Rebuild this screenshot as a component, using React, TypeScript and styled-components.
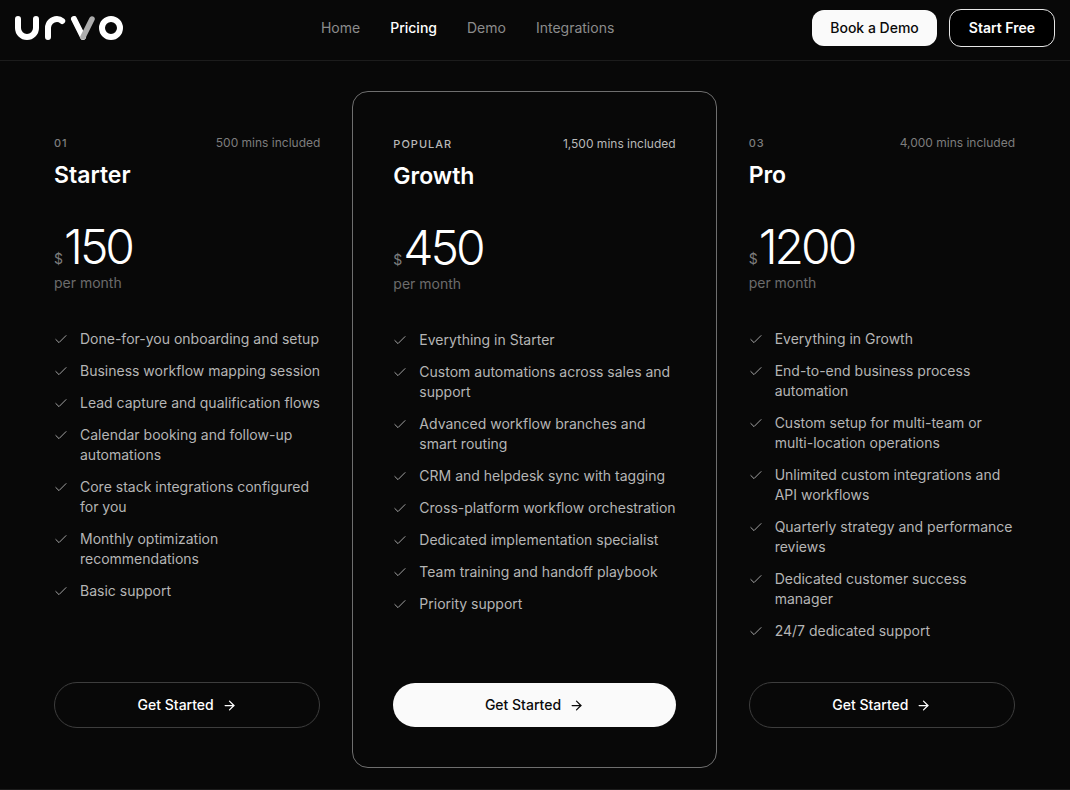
import React from 'react';
import styled, { createGlobalStyle } from 'styled-components';
import { ArrowRight } from 'lucide-react';

const GlobalStyle = createGlobalStyle`
  *, *::before, *::after { box-sizing: border-box; }
  body {
    margin: 0;
    background: #080808;
    color: #fff;
    font-family: Inter, "Liberation Sans", sans-serif;
    font-size: 14px;
    line-height: 20px;
  }
`;

const Header = styled.header`
  display: flex;
  align-items: center;
  justify-content: space-between;
  padding: 9px 15px 13px;
  border-bottom: 1px solid #1c1c1c;
`;

const LogoLink = styled.a`
  display: block;
  svg { display: block; }
`;

const Nav = styled.nav`
  display: flex;
  gap: 30px;
`;

const NavLink = styled.a<{ $active?: boolean }>`
  color: ${p => (p.$active ? '#fff' : '#8c8c8c')};
  font-weight: ${p => (p.$active ? 500 : 400)};
  text-decoration: none;
`;

const Actions = styled.div`
  display: flex;
  align-items: center;
  gap: 12px;
`;

const HeaderButton = styled.button<{ $outlined?: boolean }>`
  padding: ${p => (p.$outlined ? '8px 19px' : '8px 18px')};
  border: ${p => (p.$outlined ? '1px solid #e6e6e6' : '0')};
  border-radius: 12px;
  background: ${p => (p.$outlined ? '#000' : '#fafafa')};
  color: ${p => (p.$outlined ? '#fff' : '#0a0a0a')};
  font: ${p => (p.$outlined ? 600 : 500)} 14px/20px Inter, "Liberation Sans", sans-serif;
  cursor: pointer;
`;

const Plans = styled.main`
  display: grid;
  grid-template-columns: 1fr 1.1fr 1fr;
  padding: 30px 23px 21px 22px;
  border-bottom: 1px solid #1c1c1c;
`;

const Card = styled.article<{ $featured: boolean }>`
  display: flex;
  flex-direction: column;
  padding: ${p => (p.$featured ? '40px' : '40px 32px')};
  border: ${p => (p.$featured ? '1px solid #6e6e6e' : '0')};
  border-radius: 16px;
`;

const CardTop = styled.div<{ $featured: boolean }>`
  display: flex;
  justify-content: space-between;
  margin-bottom: 4px;
  color: ${p => (p.$featured ? '#b8b8b8' : '#7d7d7d')};
  font-size: 12px;
  line-height: 24px;
`;

const Tag = styled.span`
  font-size: 11px;
  font-weight: 500;
  letter-spacing: 1px;
`;

const PlanName = styled.h2`
  margin: 0 0 32px;
  font-size: 23px;
  font-weight: 600;
  line-height: 32px;
`;

const Price = styled.div`
  display: flex;
  align-items: baseline;
  gap: 1px;
  height: 48px;
`;

const Currency = styled.span`
  color: #7d7d7d;
`;

const Amount = styled.span`
  font-size: 48px;
  font-weight: 300;
  line-height: 48px;
  letter-spacing: -3px;
`;

const Period = styled.p`
  margin: 2px 0 0;
  color: #6c6c6c;
`;

const Features = styled.ul`
  display: flex;
  flex-direction: column;
  gap: 12px;
  margin: 36px 0 41px;
  padding: 0;
  list-style: none;
`;

const Feature = styled.li`
  display: flex;
  gap: 12px;
  color: #b5b5b5;
  svg {
    flex: none;
    margin-top: 3px;
    color: #a3a3a3;
  }
`;

const FeatureText = styled.span`
  white-space: pre;
`;

const StartButton = styled.button<{ $featured: boolean }>`
  display: flex;
  align-items: center;
  justify-content: center;
  gap: 8px;
  margin-top: auto;
  padding: 12px 24px;
  border: ${p => (p.$featured ? '0' : '1px solid #3d3d3d')};
  border-radius: 24px;
  background: ${p => (p.$featured ? '#fafafa' : 'transparent')};
  color: ${p => (p.$featured ? '#0a0a0a' : '#fff')};
  font: 500 14px/20px Inter, "Liberation Sans", sans-serif;
  cursor: pointer;
`;

function Logo() {
  return (
    <svg width="108" height="24" viewBox="0 0 108 24" fill="none" stroke="#fff" strokeWidth="6" strokeLinecap="round" role="img" aria-label="urvo">
      <path d="M3 3V12a9 9 0 0 0 18 0V3" />
      <path d="M33 21V12a9 9 0 0 1 9-9q3 0 5.200 2" />
      <path d="M59 3L68 21" />
      <path d="M77 3L68 21" stroke="#acacac" strokeWidth="5.500" />
      <circle cx="96" cy="12" r="9" />
    </svg>
  );
}

function CheckMark() {
  return (
    <svg width="14" height="14" viewBox="0 0 14 14" fill="none" stroke="currentColor" strokeWidth="1" strokeLinecap="round" strokeLinejoin="round" aria-hidden="true">
      <path d="M1.800 7.500L5 10.600L12 3.600" />
    </svg>
  );
}

interface Plan {
  tag: string;
  minutes: string;
  name: string;
  amount: string;
  featured: boolean;
  features: string[];
}

const plans: Plan[] = [
  {
    tag: '01',
    minutes: '500 mins included',
    name: 'Starter',
    amount: '150',
    featured: false,
    features: [
      'Done-for-you onboarding and setup',
      'Business workflow mapping session',
      'Lead capture and qualification flows',
      'Calendar booking and follow-up\nautomations',
      'Core stack integrations configured\nfor you',
      'Monthly optimization\nrecommendations',
      'Basic support',
    ],
  },
  {
    tag: 'POPULAR',
    minutes: '1,500 mins included',
    name: 'Growth',
    amount: '450',
    featured: true,
    features: [
      'Everything in Starter',
      'Custom automations across sales and\nsupport',
      'Advanced workflow branches and\nsmart routing',
      'CRM and helpdesk sync with tagging',
      'Cross-platform workflow orchestration',
      'Dedicated implementation specialist',
      'Team training and handoff playbook',
      'Priority support',
    ],
  },
  {
    tag: '03',
    minutes: '4,000 mins included',
    name: 'Pro',
    amount: '1200',
    featured: false,
    features: [
      'Everything in Growth',
      'End-to-end business process\nautomation',
      'Custom setup for multi-team or\nmulti-location operations',
      'Unlimited custom integrations and\nAPI workflows',
      'Quarterly strategy and performance\nreviews',
      'Dedicated customer success\nmanager',
      '24/7 dedicated support',
    ],
  },
];

function PlanCard({ plan }: { plan: Plan }) {
  return (
    <Card $featured={plan.featured}>
      <CardTop $featured={plan.featured}>
        <Tag>{plan.tag}</Tag>
        <span>{plan.minutes}</span>
      </CardTop>
      <PlanName>{plan.name}</PlanName>
      <Price>
        <Currency>$</Currency>
        <Amount>{plan.amount}</Amount>
      </Price>
      <Period>per month</Period>
      <Features>
        {plan.features.map(text => (
          <Feature key={text}>
            <CheckMark />
            <FeatureText>{text}</FeatureText>
          </Feature>
        ))}
      </Features>
      <StartButton type="button" $featured={plan.featured}>
        Get Started
        <ArrowRight size={15} aria-hidden="true" />
      </StartButton>
    </Card>
  );
}

export default function App() {
  return (
    <>
      <GlobalStyle />
      <Header>
        <LogoLink href="#"><Logo /></LogoLink>
        <Nav>
          <NavLink href="#home">Home</NavLink>
          <NavLink href="#pricing" $active aria-current="page">Pricing</NavLink>
          <NavLink href="#demo">Demo</NavLink>
          <NavLink href="#integrations">Integrations</NavLink>
        </Nav>
        <Actions>
          <HeaderButton type="button">Book a Demo</HeaderButton>
          <HeaderButton type="button" $outlined>Start Free</HeaderButton>
        </Actions>
      </Header>
      <Plans>
        {plans.map(plan => <PlanCard key={plan.name} plan={plan} />)}
      </Plans>
    </>
  );
}
